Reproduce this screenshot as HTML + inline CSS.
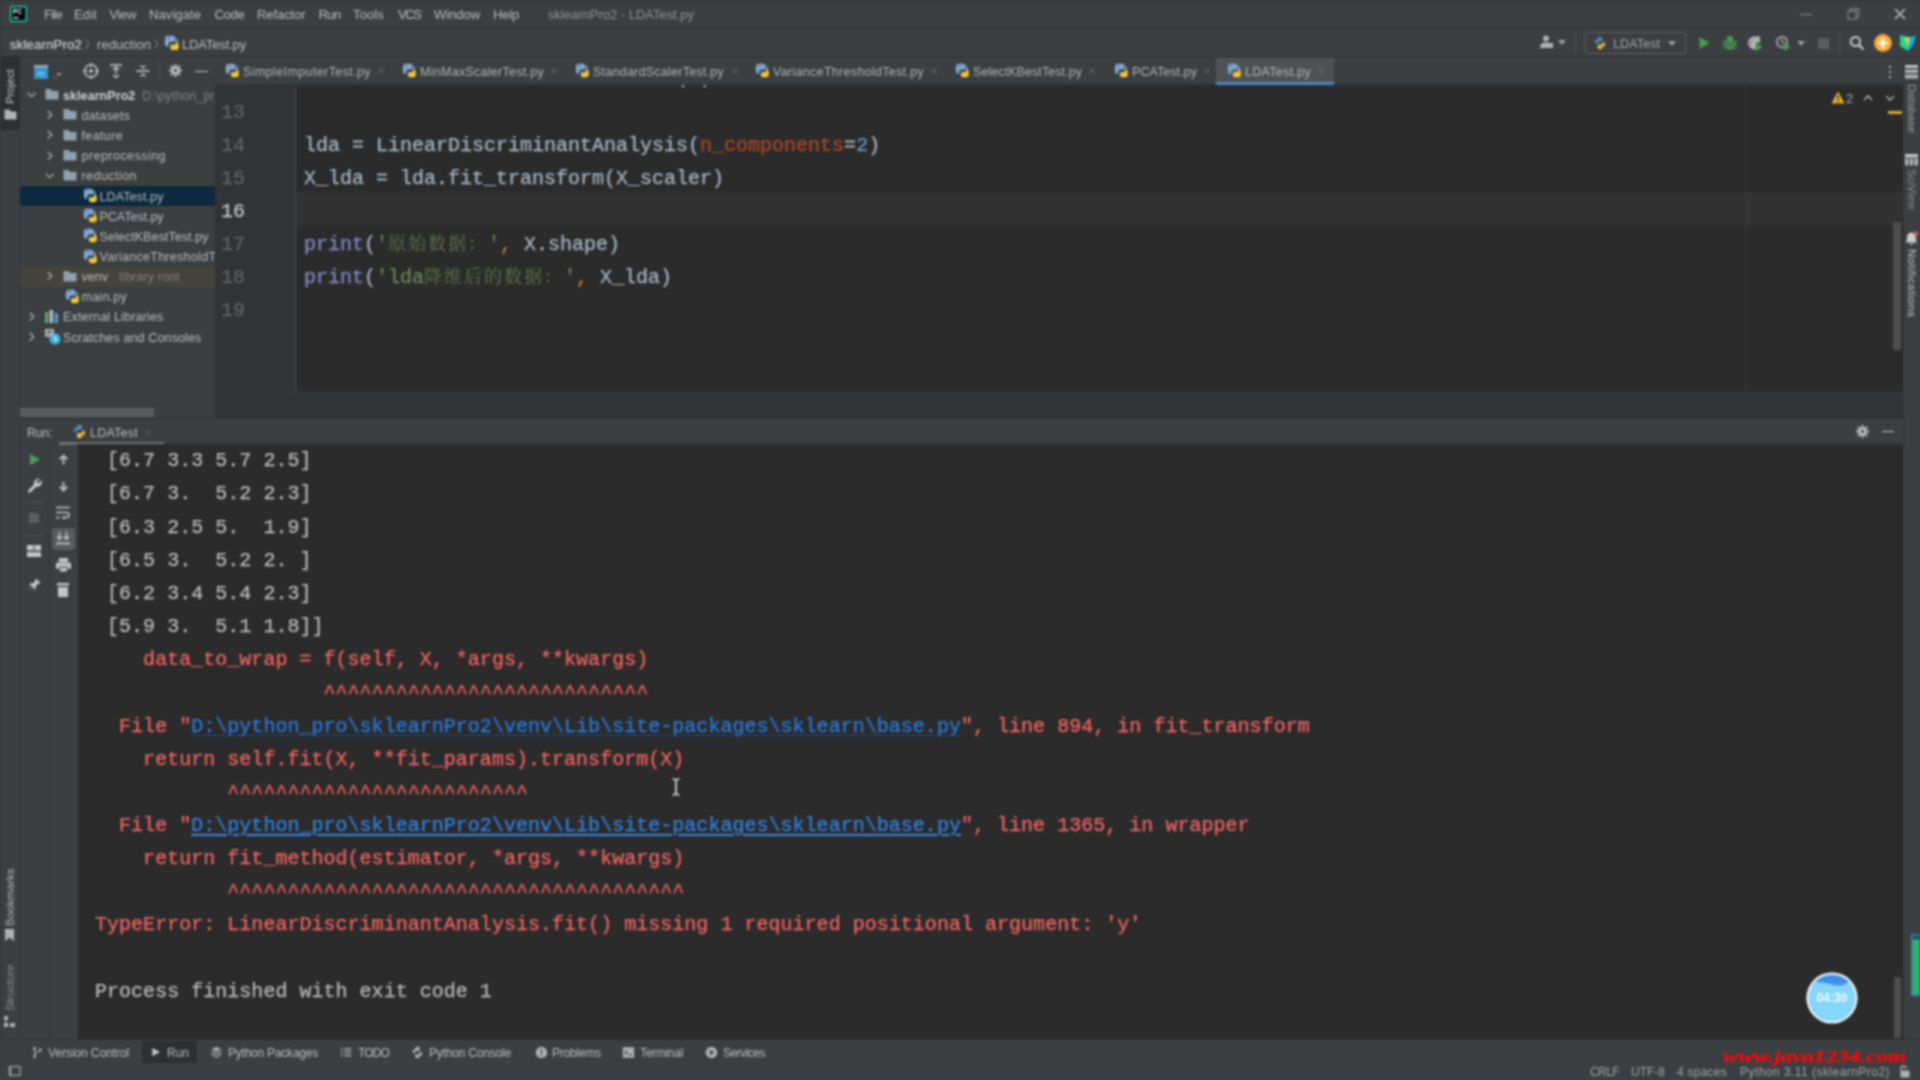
<!DOCTYPE html>
<html lang="zh">
<head>
<meta charset="utf-8">
<title>sklearnPro2 - LDATest.py</title>
<style>
*{box-sizing:border-box;margin:0;padding:0}
html,body{width:1920px;height:1080px;overflow:hidden;background:#3c3f41}
body{position:relative;filter:blur(1px);font-family:"Liberation Sans","Noto Sans CJK SC",sans-serif;font-size:12.5px;color:#bbbbbb}
.a{position:absolute}
.t{position:absolute;white-space:nowrap;line-height:16px;height:16px}
.mono{font-family:"Liberation Mono","Noto Sans CJK SC",monospace;-webkit-text-stroke:.25px currentColor}
svg{position:absolute;overflow:visible}
#titlebar{left:0;top:0;width:1920px;height:28px;background:#3c3f41;border-bottom:1px solid #2f3133}
#navbar{left:0;top:28px;width:1920px;height:29px;background:#3c3f41;border-bottom:1px solid #323232}
#leftstrip{left:0;top:57px;width:20px;height:983px;background:#3c3f41;border-right:1px solid #353739}
#rightstrip{left:1903px;top:57px;width:17px;height:983px;background:#3c3f41;border-left:1px solid #353739}
#project{left:20px;top:57px;width:195px;height:362px;background:#3c3f41}
#tabbar{left:215px;top:57px;width:1688px;height:28px;background:#3c3f41}
#editor{top:85px;height:307px;background:#2b2b2b;overflow:hidden}
#edbottom{top:392px;height:26px;background:#313335;border-top:1px solid #3b3d3f}
#runhead{left:20px;top:418px;width:1883px;height:26px;background:#3c3f41;border-top:1px solid #323232;border-bottom:1px solid #353739}
#runtools{left:20px;top:444px;width:58px;height:595px;background:#3c3f41}
#console{left:78px;top:444px;width:1825px;height:595px;background:#2b2b2b;overflow:hidden}
#bottomstrip{left:0;top:1039px;width:1920px;height:24px;background:#3c3f41;border-top:1px solid #323232}
#statusbar{left:0;top:1063px;width:1920px;height:17px;background:#3c3f41}
.ln{position:absolute;width:24px;height:33px;line-height:33px;font-size:20px;color:#606366;text-align:right;white-space:pre}
.cl{position:absolute;height:33px;line-height:33px;font-size:20px;color:#a9b7c6;white-space:pre}
.cjk{font-family:"Noto Serif CJK SC","Noto Sans CJK SC",serif;line-height:0;font-size:18px;letter-spacing:2px;-webkit-text-stroke:0;color:#5f7a50}
.k{color:#cc7832}.s{color:#6a8759}.b{color:#8888c6}.n{color:#6897bb}.p{color:#aa4926}
.co{position:absolute;left:17px;height:33px;line-height:33px;font-size:20px;color:#bbbbbb;white-space:pre;letter-spacing:.025px}
.er{color:#f46561}
.lk1{color:#287bde;text-decoration:underline;text-decoration-color:#1c4c84;text-decoration-thickness:1.2px;text-underline-offset:3px}
.lku{color:#2f82e4;text-decoration:underline;text-decoration-color:#3a86e6;text-decoration-thickness:1.5px;text-underline-offset:3px}
</style>
</head>
<body>
<div id="titlebar" class="a"></div><div id="navbar" class="a"></div>
<div id="leftstrip" class="a"></div><div id="rightstrip" class="a"></div>
<div id="project" class="a"></div><div id="tabbar" class="a"></div>
<div class="a" style="left:0.0px;top:0.0px;width:1920.0px;height:1.0px;background:#2e3032;"></div>
<div class="a" style="left:0.0px;top:0.0px;width:1.0px;height:1080.0px;background:#303234;"></div>
<svg style="left:10.0px;top:6.0px;" width="17" height="16" viewBox="0 0 17 16"><rect x="0" y="0" width="17" height="16" rx="2" fill="#23d18b"/><rect x="0" y="0" width="17" height="16" rx="2" fill="#12b5d6" opacity=".35"/><rect x="1.6" y="1.6" width="13.8" height="12.8" fill="#000"/><text x="3" y="8.300" font-family="Liberation Sans,sans-serif" font-weight="bold" font-size="6.5" fill="#fff">PC</text><rect x="3" y="11" width="5.500" height="1.300" fill="#fff"/></svg>
<div class="t " style="left:44.0px;top:6.5px;font-size:13.00px;color:#bbbbbb;letter-spacing:-0.737px;">File</div>
<div class="t " style="left:74.0px;top:6.5px;font-size:13.00px;color:#bbbbbb;letter-spacing:0.150px;">Edit</div>
<div class="t " style="left:109.5px;top:6.5px;font-size:13.00px;color:#bbbbbb;letter-spacing:-0.361px;">View</div>
<div class="t " style="left:149.0px;top:6.5px;font-size:13.00px;color:#bbbbbb;letter-spacing:0.086px;">Navigate</div>
<div class="t " style="left:214.5px;top:6.5px;font-size:13.00px;color:#bbbbbb;letter-spacing:-0.270px;">Code</div>
<div class="t " style="left:257.0px;top:6.5px;font-size:13.00px;color:#bbbbbb;letter-spacing:-0.079px;">Refactor</div>
<div class="t " style="left:318.7px;top:6.5px;font-size:13.00px;color:#bbbbbb;letter-spacing:-0.683px;">Run</div>
<div class="t " style="left:353.0px;top:6.5px;font-size:13.00px;color:#bbbbbb;letter-spacing:0.130px;">Tools</div>
<div class="t " style="left:398.0px;top:6.5px;font-size:13.00px;color:#bbbbbb;letter-spacing:-1.343px;">VCS</div>
<div class="t " style="left:434.0px;top:6.5px;font-size:13.00px;color:#bbbbbb;letter-spacing:-0.039px;">Window</div>
<div class="t " style="left:493.0px;top:6.5px;font-size:13.00px;color:#bbbbbb;letter-spacing:-0.184px;">Help</div>
<div class="t " style="left:548.0px;top:6.5px;font-size:13.00px;color:#8e9091;letter-spacing:-0.018px;">sklearnPro2 - LDATest.py</div>
<svg style="left:1800.0px;top:8.0px;" width="12" height="12" viewBox="0 0 12 12"><path d="M0 6.500h12" stroke="#85878a" stroke-width="1.2"/></svg>
<svg style="left:1847.0px;top:8.0px;" width="12" height="12" viewBox="0 0 12 12"><path d="M2.500 3.500h7v7M0.800 1.500h8.500" stroke="#9a9c9e" stroke-width="1.1" fill="none" opacity="0"/><rect x="1" y="3" width="8" height="8" fill="none" stroke="#85878a" stroke-width="1.2"/><path d="M3.500 3V.8h8v8H9.500" fill="none" stroke="#85878a" stroke-width="1.2"/></svg>
<svg style="left:1894.0px;top:8.0px;" width="12" height="12" viewBox="0 0 12 12"><path d="M1 1l10 10M11 1L1 11" stroke="#c3c5c7" stroke-width="1.500"/></svg>
<div class="t " style="left:10.0px;top:36.5px;font-size:13.00px;color:#c9cbcc;letter-spacing:0.239px;text-shadow:0 0 .6px #c9cbcc;">sklearnPro2</div>
<svg style="left:78.5px;top:35.5px;" width="16" height="16" viewBox="0 0 16 16"><path d="M6.500 3.500l3.500 4.500-3.500 4.500" fill="none" stroke="#77797b" stroke-width="1.1"/></svg>
<div class="t " style="left:97.0px;top:36.5px;font-size:13.00px;color:#bbbbbb;letter-spacing:0.058px;">reduction</div>
<svg style="left:147.5px;top:35.5px;" width="16" height="16" viewBox="0 0 16 16"><path d="M6.500 3.500l3.500 4.500-3.500 4.500" fill="none" stroke="#77797b" stroke-width="1.1"/></svg>
<svg style="left:163.5px;top:34.5px;" width="16" height="16" viewBox="0 0 16 16"><path d="M3.800 .8h5c1.300 0 2.200.9 2.200 2.200v3.800H7c-1.500 0-2.600 1.100-2.600 2.600v2H3.200C1.900 11.400 1 10.400 1 9V3.800C1 2 2.100.8 3.800.8z" fill="#7fa9d6"/><path d="M11.600 2.500l2.200 2.300v2.500h-2.200z" fill="#a9b7c6" opacity=".75"/><path d="M12 7.400h.8c1.200 0 1.900 1 1.900 2.200v3c0 1.500-1 2.500-2.500 2.500H8.400c-1.200 0-2-.8-2-2v-3.300h3.400c1.300 0 2.200-1 2.200-2.400z" fill="#f0c63c"/><circle cx="4.600" cy="3" r=".8" fill="#3c3f41"/></svg>
<div class="t " style="left:182.0px;top:36.5px;font-size:13.00px;color:#bbbbbb;letter-spacing:-0.151px;">LDATest.py</div>
<svg style="left:1538.0px;top:34.0px;" width="16" height="16" viewBox="0 0 16 16"><circle cx="8" cy="4.500" r="3" fill="#afb1b3"/><path d="M2 14c0-4 2.500-5.500 6-5.500s6 1.500 6 5.500z" fill="#afb1b3"/><rect x="9" y="9" width="6" height="5" fill="#afb1b3"/></svg>
<svg style="left:1558.0px;top:40.0px;" width="8" height="6" viewBox="0 0 8 6"><path d="M0 0h8l-4 5z" fill="#9da0a2"/></svg>
<div class="a" style="left:1585px;top:32px;width:101px;height:22px;border:1px solid #5e6162;border-radius:2px"></div>
<svg style="left:1593.0px;top:36.0px;" width="14" height="14" viewBox="0 0 16 16"><path d="M7.8 1C5 1 5.2 2.2 5.2 2.2v1.3h2.7v.4H4.1S2.3 3.7 2.3 6.5s1.6 2.7 1.6 2.7h.9V7.9s0-1.6 1.6-1.6h2.7s1.500.0 1.5-1.500V2.400S10.900 1 7.800 1z" fill="#4f8fc5"/><path d="M8.2 15c2.800 0 2.600-1.200 2.600-1.200v-1.300H8.100v-.4h3.800s1.800.2 1.800-2.600-1.600-2.700-1.600-2.700h-.9v1.300s0 1.600-1.600 1.600H6.900s-1.500 0-1.500 1.500v2.400S5.100 15 8.200 15z" fill="#f0c23b"/></svg>
<div class="t " style="left:1613.0px;top:35.5px;font-size:12.50px;color:#a6a8aa;letter-spacing:0.098px;">LDATest</div>
<svg style="left:1668.0px;top:40.5px;" width="8" height="6" viewBox="0 0 8 6"><path d="M0 0h8l-4 5z" fill="#9da0a2"/></svg>
<svg style="left:1696.0px;top:34.5px;" width="16" height="16" viewBox="0 0 16 16"><path d="M3.500 2l10 6-10 6z" fill="#499c54"/></svg>
<svg style="left:1722.0px;top:34.5px;" width="16" height="16" viewBox="0 0 16 16"><ellipse cx="8" cy="9.300" rx="5" ry="5.500" fill="#499c54"/><path d="M4.800 4.200a3.200 3.200 0 016.400 0z" fill="#499c54"/><path d="M1 6l2.500 1.500M15 6l-2.500 1.500M.8 9.500h2.500M15.200 9.500h-2.500M1.300 13.500l2.500-1.300M14.700 13.500l-2.500-1.300" stroke="#499c54" stroke-width="1.400"/><path d="M4 8h8M4 11h8" stroke="#3c3f41" stroke-width="1.100"/></svg>
<svg style="left:1747.0px;top:34.5px;" width="16" height="16" viewBox="0 0 16 16"><path d="M7.500 1.500a6.500 6.500 0 100 13c.5 0 1 0 1.500-.2V1.700c-.5-.2-1-.2-1.500-.2z" fill="#afb1b3"/><path d="M8 1.500h5v6H8z" fill="#afb1b3"/><path d="M4 5a4 4 0 000 6z" fill="#3c3f41" opacity=".5"/><path d="M9.500 8l6 4-6 4z" fill="#499c54"/></svg>
<svg style="left:1775.0px;top:34.5px;" width="16" height="16" viewBox="0 0 16 16"><circle cx="7" cy="7" r="5.200" fill="none" stroke="#afb1b3" stroke-width="1.600"/><path d="M7 3.500V7l2.500 1.500" stroke="#afb1b3" stroke-width="1.300" fill="none"/><path d="M9 8l6.500 4-6.500 4z" fill="#499c54"/></svg>
<svg style="left:1797.0px;top:40.5px;" width="8" height="6" viewBox="0 0 8 6"><path d="M0 0h8l-4 5z" fill="#9da0a2"/></svg>
<div class="a" style="left:1817.5px;top:37.5px;width:11.0px;height:11.0px;background:#5a5d5f;"></div>
<div class="a" style="left:1839.0px;top:33.0px;width:1.0px;height:20.0px;background:#515456;"></div>
<div class="a" style="left:1574.5px;top:33.0px;width:1.0px;height:20.0px;background:#515456;"></div>
<svg style="left:1848.5px;top:35.0px;" width="16" height="16" viewBox="0 0 16 16"><circle cx="6.500" cy="6.500" r="4.600" fill="none" stroke="#c9cbcc" stroke-width="2"/><path d="M10 10l4.500 4.500" stroke="#c9cbcc" stroke-width="2.200"/></svg>
<svg style="left:1873.5px;top:33.5px;" width="18" height="18" viewBox="0 0 18 18"><circle cx="9" cy="9" r="9" fill="#f2a134"/><circle cx="9" cy="9" r="7" fill="#f7b64e"/><path d="M9 4.500v9M4.500 9h9" stroke="#fff" stroke-width="2.200"/></svg>
<svg style="left:1899.0px;top:33.5px;" width="18" height="18" viewBox="0 0 18 18"><path d="M1 1l8 2v14l-8-5z" fill="#21d789"/><path d="M9 3l8-1-3 9-5 6z" fill="#0fb2e8"/><path d="M5 3l6 1-2 9z" fill="#f5d23c" opacity=".9"/></svg>
<div class="a" style="left:0.0px;top:57.0px;width:20.0px;height:73.0px;background:#2d2f30;"></div>
<div class="t vt" style="left:2px;top:104px;font-size:11px;color:#c4c6c8;transform:rotate(-90deg);transform-origin:0 0;width:40px;letter-spacing:.1px;">Project</div>
<svg style="left:3.5px;top:108.0px;" width="13" height="13" viewBox="0 0 13 13"><path d="M.5 1.500h5l1.500 2h5.500v8h-12z" fill="#afb1b3"/></svg>
<div class="t vt" style="left:2px;top:926px;font-size:11.5px;color:#b4b6b8;transform:rotate(-90deg);transform-origin:0 0;width:62px;">Bookmarks</div>
<svg style="left:4.0px;top:929.0px;" width="11" height="12" viewBox="0 0 11 12"><path d="M1 0h9v12l-4.500-3.500L1 12z" fill="#afb1b3"/></svg>
<div class="t vt" style="left:2px;top:1011px;font-size:11.5px;color:#8a8c8e;transform:rotate(-90deg);transform-origin:0 0;width:52px;">Structure</div>
<svg style="left:4.0px;top:1016.0px;" width="11" height="12" viewBox="0 0 11 12"><rect x="0" y="0" width="4" height="4" fill="#afb1b3"/><rect x="0" y="7" width="4" height="4" fill="#afb1b3"/><rect x="6" y="7" width="5" height="4" fill="#afb1b3"/><path d="M2 4v5" stroke="#afb1b3"/></svg>
<svg style="left:1905.0px;top:65.0px;" width="13" height="14" viewBox="0 0 13 14"><rect x="0" y="0" width="13" height="3" fill="#c3c5c7"/><rect x="0" y="4.500" width="13" height="3.500" fill="#afb1b3"/><rect x="0" y="9.500" width="13" height="4" fill="#afb1b3"/></svg>
<div class="t vt" style="left:1920px;top:84px;font-size:11.5px;color:#9a9c9e;transform:rotate(90deg);transform-origin:0 0;width:50px;">Database</div>
<svg style="left:1905.0px;top:154.0px;" width="13" height="12" viewBox="0 0 13 12"><rect x="0" y="0" width="13" height="3.500" fill="#c3c5c7"/><rect x="0" y="4.500" width="3.500" height="7" fill="#afb1b3"/><rect x="4.700" y="4.500" width="3.500" height="7" fill="#afb1b3"/><rect x="9.400" y="4.500" width="3.600" height="7" fill="#afb1b3"/></svg>
<div class="t vt" style="left:1920px;top:169px;font-size:11.5px;color:#8a8c8e;transform:rotate(90deg);transform-origin:0 0;width:42px;">SciView</div>
<svg style="left:1905.0px;top:231.0px;" width="13" height="14" viewBox="0 0 13 14"><path d="M6.500 1.500c-3 0-4.500 2-4.500 5v3L.5 11.500h12L11 9.500v-3c0-3-1.500-5-4.500-5z" fill="#c9cbcc"/><path d="M5 12.500h3a1.500 1.500 0 01-3 0z" fill="#c9cbcc"/><circle cx="11" cy="2.500" r="2.300" fill="#e05555"/></svg>
<div class="t vt" style="left:1920px;top:249px;font-size:11.5px;color:#c3c5c7;transform:rotate(90deg);transform-origin:0 0;width:70px;letter-spacing:.45px">Notifications</div>
<svg style="left:33.5px;top:65.0px;" width="14" height="14" viewBox="0 0 14 14"><rect x="0" y="0" width="14" height="14" fill="#3592c4"/><rect x="0" y="0" width="14" height="3" fill="#8fa9b8"/><rect x="3" y="6" width="8" height="5" fill="#4fb4e6"/></svg>
<div class="t " style="left:52.0px;top:66.5px;font-size:10.00px;color:#8a8c8e;letter-spacing:-0.278px;">..</div>
<svg style="left:56.0px;top:73.0px;" width="6" height="4" viewBox="0 0 6 4"><path d="M0 0h6l-3 3.500z" fill="#8a8c8e"/></svg>
<svg style="left:82.5px;top:63.0px;" width="16" height="16" viewBox="0 0 16 16"><circle cx="8" cy="8" r="6.300" fill="none" stroke="#c3c5c7" stroke-width="1.500"/><circle cx="8" cy="8" r="2" fill="#c3c5c7"/><path d="M8 0v4M8 12v4M0 8h4M12 8h4" stroke="#c3c5c7" stroke-width="1.300"/></svg>
<svg style="left:108.0px;top:63.0px;" width="16" height="16" viewBox="0 0 16 16"><path d="M2 2h12" stroke="#c3c5c7" stroke-width="1.600"/><path d="M8 4.500v7M5 7l3-3 3 3" stroke="#c3c5c7" stroke-width="1.400" fill="none"/><path d="M5 12l3 2.500 3-2.500" stroke="#c3c5c7" stroke-width="1.400" fill="none"/></svg>
<svg style="left:134.5px;top:63.0px;" width="16" height="16" viewBox="0 0 16 16"><path d="M1.500 8h13" stroke="#c3c5c7" stroke-width="1.600"/><path d="M5.500 2.500L8 5l2.500-2.500M5.500 13.500L8 11l2.500 2.500" stroke="#c3c5c7" stroke-width="1.400" fill="none"/></svg>
<div class="a" style="left:159.0px;top:61.0px;width:1.0px;height:20.0px;background:#505355;"></div>
<svg style="left:168.0px;top:63.0px;" width="15" height="15" viewBox="0 0 16 16"><rect x="7" y="1" width="2" height="3.2" fill="#c3c5c7" transform="rotate(0 8 8)"/><rect x="7" y="1" width="2" height="3.2" fill="#c3c5c7" transform="rotate(45 8 8)"/><rect x="7" y="1" width="2" height="3.2" fill="#c3c5c7" transform="rotate(90 8 8)"/><rect x="7" y="1" width="2" height="3.2" fill="#c3c5c7" transform="rotate(135 8 8)"/><rect x="7" y="1" width="2" height="3.2" fill="#c3c5c7" transform="rotate(180 8 8)"/><rect x="7" y="1" width="2" height="3.2" fill="#c3c5c7" transform="rotate(225 8 8)"/><rect x="7" y="1" width="2" height="3.2" fill="#c3c5c7" transform="rotate(270 8 8)"/><rect x="7" y="1" width="2" height="3.2" fill="#c3c5c7" transform="rotate(315 8 8)"/><circle cx="8" cy="8" r="4.2" fill="#c3c5c7"/><circle cx="8" cy="8" r="1.8" fill="#3c3f41"/></svg>
<div class="a" style="left:195.0px;top:70.5px;width:13.0px;height:1.8px;background:#c3c5c7;"></div>
<div class="a" style="left:20.0px;top:186.1px;width:195.0px;height:20.2px;background:#0d293e;"></div>
<div class="a" style="left:20.0px;top:266.6px;width:195.0px;height:20.2px;background:#45433a;"></div>
<svg style="left:24.2px;top:87.0px;" width="15.5" height="15.5" viewBox="0 0 16 16"><path d="M4 6l4 4 4-4" fill="none" stroke="#9da0a2" stroke-width="1.6"/></svg>
<svg style="left:43.7px;top:86.3px;" width="16" height="16" viewBox="0 0 16 16"><path d="M1.5 3h5l1.5 2h6.5v8.5h-13z" fill="#8fa1ad"/></svg>
<div class="t " style="left:63.0px;top:87.8px;font-size:12.50px;color:#d0d2d3;letter-spacing:0.075px;font-weight:bold;">sklearnPro2</div>
<div class="t " style="left:142.0px;top:87.8px;font-size:12.50px;color:#7f8284;letter-spacing:0.094px;">D:\python_pro\sk</div>
<svg style="left:41.8px;top:107.2px;" width="15.5" height="15.5" viewBox="0 0 16 16"><path d="M6 4l4 4-4 4" fill="none" stroke="#9da0a2" stroke-width="1.6"/></svg>
<svg style="left:62.0px;top:106.4px;" width="16" height="16" viewBox="0 0 16 16"><path d="M1.5 3h5l1.5 2h6.5v8.5h-13z" fill="#8fa1ad"/></svg>
<div class="t " style="left:81.5px;top:107.9px;font-size:12.50px;color:#bbbbbb;letter-spacing:0.156px;">datasets</div>
<svg style="left:41.8px;top:127.3px;" width="15.5" height="15.5" viewBox="0 0 16 16"><path d="M6 4l4 4-4 4" fill="none" stroke="#9da0a2" stroke-width="1.6"/></svg>
<svg style="left:62.0px;top:126.6px;" width="16" height="16" viewBox="0 0 16 16"><path d="M1.5 3h5l1.5 2h6.5v8.5h-13z" fill="#8fa1ad"/></svg>
<div class="t " style="left:81.5px;top:128.1px;font-size:12.50px;color:#bbbbbb;letter-spacing:0.369px;">feature</div>
<svg style="left:41.8px;top:147.5px;" width="15.5" height="15.5" viewBox="0 0 16 16"><path d="M6 4l4 4-4 4" fill="none" stroke="#9da0a2" stroke-width="1.6"/></svg>
<svg style="left:62.0px;top:146.8px;" width="16" height="16" viewBox="0 0 16 16"><path d="M1.5 3h5l1.5 2h6.5v8.5h-13z" fill="#8fa1ad"/></svg>
<div class="t " style="left:81.5px;top:148.2px;font-size:12.50px;color:#bbbbbb;letter-spacing:0.460px;">preprocessing</div>
<svg style="left:41.8px;top:167.6px;" width="15.5" height="15.5" viewBox="0 0 16 16"><path d="M4 6l4 4 4-4" fill="none" stroke="#9da0a2" stroke-width="1.6"/></svg>
<svg style="left:62.0px;top:166.9px;" width="16" height="16" viewBox="0 0 16 16"><path d="M1.5 3h5l1.5 2h6.5v8.5h-13z" fill="#8fa1ad"/></svg>
<div class="t " style="left:81.5px;top:168.4px;font-size:12.50px;color:#bbbbbb;letter-spacing:0.453px;">reduction</div>
<svg style="left:82.5px;top:188.1px;" width="15" height="15" viewBox="0 0 16 16"><path d="M3.800 .8h5c1.300 0 2.200.9 2.200 2.200v3.800H7c-1.500 0-2.600 1.100-2.600 2.600v2H3.200C1.900 11.400 1 10.400 1 9V3.800C1 2 2.100.8 3.800.8z" fill="#7fa9d6"/><path d="M11.600 2.500l2.200 2.300v2.500h-2.200z" fill="#a9b7c6" opacity=".75"/><path d="M12 7.400h.8c1.200 0 1.900 1 1.900 2.200v3c0 1.500-1 2.500-2.500 2.500H8.400c-1.200 0-2-.8-2-2v-3.300h3.400c1.300 0 2.200-1 2.200-2.400z" fill="#f0c63c"/><circle cx="4.600" cy="3" r=".8" fill="#3c3f41"/></svg>
<div class="t " style="left:99.5px;top:188.6px;font-size:12.50px;color:#bbbbbb;letter-spacing:0.101px;">LDATest.py</div>
<svg style="left:82.5px;top:208.2px;" width="15" height="15" viewBox="0 0 16 16"><path d="M3.800 .8h5c1.300 0 2.200.9 2.200 2.200v3.800H7c-1.500 0-2.600 1.100-2.600 2.600v2H3.200C1.900 11.400 1 10.400 1 9V3.800C1 2 2.100.8 3.800.8z" fill="#7fa9d6"/><path d="M11.600 2.500l2.200 2.300v2.500h-2.200z" fill="#a9b7c6" opacity=".75"/><path d="M12 7.400h.8c1.200 0 1.900 1 1.900 2.200v3c0 1.500-1 2.500-2.500 2.500H8.400c-1.200 0-2-.8-2-2v-3.300h3.400c1.300 0 2.200-1 2.200-2.400z" fill="#f0c63c"/><circle cx="4.600" cy="3" r=".8" fill="#3c3f41"/></svg>
<div class="t " style="left:99.5px;top:208.7px;font-size:12.50px;color:#bbbbbb;letter-spacing:-0.037px;">PCATest.py</div>
<svg style="left:82.5px;top:228.3px;" width="15" height="15" viewBox="0 0 16 16"><path d="M3.800 .8h5c1.300 0 2.200.9 2.200 2.200v3.800H7c-1.500 0-2.600 1.100-2.600 2.600v2H3.200C1.900 11.400 1 10.400 1 9V3.800C1 2 2.100.8 3.800.8z" fill="#7fa9d6"/><path d="M11.600 2.500l2.200 2.300v2.500h-2.200z" fill="#a9b7c6" opacity=".75"/><path d="M12 7.400h.8c1.200 0 1.900 1 1.900 2.200v3c0 1.500-1 2.500-2.500 2.500H8.400c-1.200 0-2-.8-2-2v-3.300h3.400c1.300 0 2.200-1 2.200-2.400z" fill="#f0c63c"/><circle cx="4.600" cy="3" r=".8" fill="#3c3f41"/></svg>
<div class="t " style="left:99.5px;top:228.8px;font-size:12.50px;color:#bbbbbb;letter-spacing:0.073px;">SelectKBestTest.py</div>
<svg style="left:82.5px;top:248.5px;" width="15" height="15" viewBox="0 0 16 16"><path d="M3.800 .8h5c1.300 0 2.200.9 2.200 2.200v3.800H7c-1.500 0-2.600 1.100-2.600 2.600v2H3.200C1.900 11.400 1 10.400 1 9V3.800C1 2 2.100.8 3.800.8z" fill="#7fa9d6"/><path d="M11.600 2.500l2.200 2.300v2.500h-2.200z" fill="#a9b7c6" opacity=".75"/><path d="M12 7.400h.8c1.200 0 1.900 1 1.900 2.200v3c0 1.500-1 2.500-2.500 2.500H8.400c-1.200 0-2-.8-2-2v-3.300h3.400c1.300 0 2.200-1 2.200-2.400z" fill="#f0c63c"/><circle cx="4.600" cy="3" r=".8" fill="#3c3f41"/></svg>
<div class="t " style="left:99.5px;top:249.0px;font-size:12.50px;color:#bbbbbb;letter-spacing:0.288px;">VarianceThresholdTest.py</div>
<svg style="left:41.8px;top:268.4px;" width="15.5" height="15.5" viewBox="0 0 16 16"><path d="M6 4l4 4-4 4" fill="none" stroke="#9da0a2" stroke-width="1.6"/></svg>
<svg style="left:62.0px;top:267.6px;" width="16" height="16" viewBox="0 0 16 16"><path d="M1.5 3h5l1.5 2h6.5v8.5h-13z" fill="#8fa1ad"/></svg>
<div class="t " style="left:81.5px;top:269.1px;font-size:12.50px;color:#bbbbbb;letter-spacing:0.024px;">venv</div>
<div class="t " style="left:119.0px;top:269.1px;font-size:12.50px;color:#7f8284;letter-spacing:0.163px;">library root</div>
<svg style="left:64.5px;top:288.8px;" width="15" height="15" viewBox="0 0 16 16"><path d="M3.800 .8h5c1.300 0 2.200.9 2.200 2.200v3.800H7c-1.500 0-2.600 1.100-2.600 2.600v2H3.200C1.900 11.400 1 10.400 1 9V3.800C1 2 2.100.8 3.800.8z" fill="#7fa9d6"/><path d="M11.600 2.500l2.200 2.300v2.500h-2.200z" fill="#a9b7c6" opacity=".75"/><path d="M12 7.400h.8c1.200 0 1.900 1 1.900 2.200v3c0 1.500-1 2.500-2.500 2.500H8.400c-1.200 0-2-.8-2-2v-3.300h3.400c1.300 0 2.200-1 2.200-2.400z" fill="#f0c63c"/><circle cx="4.600" cy="3" r=".8" fill="#3c3f41"/></svg>
<div class="t " style="left:81.5px;top:289.3px;font-size:12.50px;color:#bbbbbb;letter-spacing:0.247px;">main.py</div>
<svg style="left:24.2px;top:308.7px;" width="15.5" height="15.5" viewBox="0 0 16 16"><path d="M6 4l4 4-4 4" fill="none" stroke="#9da0a2" stroke-width="1.6"/></svg>
<svg style="left:45.0px;top:309.9px;" width="14" height="13" viewBox="0 0 14 13"><rect x="0" y="2" width="3" height="11" fill="#6aa37a"/><rect x="4.500" y="0" width="3.500" height="13" fill="#b4bcc3"/><path d="M9.500 2.500l3.500 1.200v9.300H9.500z" fill="#5a98c8"/></svg>
<div class="t " style="left:63.0px;top:309.4px;font-size:12.50px;color:#bbbbbb;letter-spacing:0.180px;">External Libraries</div>
<svg style="left:24.2px;top:328.8px;" width="15.5" height="15.5" viewBox="0 0 16 16"><path d="M6 4l4 4-4 4" fill="none" stroke="#9da0a2" stroke-width="1.6"/></svg>
<svg style="left:45.0px;top:329.1px;" width="16" height="16" viewBox="0 0 16 16"><rect x="0" y="0" width="9" height="8" fill="#afb1b3"/><path d="M2 2.500h5M2 5h3" stroke="#3c3f41"/><circle cx="10" cy="10" r="5.500" fill="#40b6e0"/><path d="M10 7v3.500l2 1" stroke="#fff" stroke-width="1.200" fill="none"/></svg>
<div class="t " style="left:63.0px;top:329.6px;font-size:12.50px;color:#bbbbbb;letter-spacing:0.137px;">Scratches and Consoles</div>
<div class="a" style="left:20.0px;top:404.0px;width:195.0px;height:15.0px;background:#3c3f41;"></div>
<div class="a" style="left:20.0px;top:408.0px;width:134.0px;height:8.5px;background:#595b5d;"></div>
<div class="a" style="left:215px;top:57px;width:1688px;height:28px;background:#3c3f41;border-bottom:1px solid #323232"></div>
<div class="a" style="left:1216.0px;top:58.0px;width:118.0px;height:27.0px;background:#4e5254;"></div>
<div class="a" style="left:1216.0px;top:81.5px;width:118.0px;height:3.5px;background:#4a88c7;"></div>
<svg style="left:225.0px;top:63.0px;" width="15" height="15" viewBox="0 0 16 16"><path d="M3.800 .8h5c1.300 0 2.200.9 2.200 2.200v3.800H7c-1.500 0-2.600 1.100-2.600 2.600v2H3.200C1.900 11.400 1 10.400 1 9V3.800C1 2 2.100.8 3.800.8z" fill="#7fa9d6"/><path d="M11.600 2.500l2.200 2.300v2.500h-2.200z" fill="#a9b7c6" opacity=".75"/><path d="M12 7.400h.8c1.200 0 1.900 1 1.900 2.200v3c0 1.500-1 2.500-2.500 2.500H8.400c-1.200 0-2-.8-2-2v-3.300h3.400c1.300 0 2.200-1 2.200-2.400z" fill="#f0c63c"/><circle cx="4.600" cy="3" r=".8" fill="#3c3f41"/></svg>
<div class="t " style="left:243.0px;top:63.5px;font-size:12.50px;color:#b2b4b6;letter-spacing:0.391px;">SimpleImputerTest.py</div>
<svg style="left:375.0px;top:65.0px;" width="12" height="12" viewBox="0 0 16 16"><path d="M4.5 4.5l7 7M11.5 4.5l-7 7" stroke="#6e7173" stroke-width="1.2" fill="none"/></svg>
<svg style="left:402.0px;top:63.0px;" width="15" height="15" viewBox="0 0 16 16"><path d="M3.800 .8h5c1.300 0 2.200.9 2.200 2.200v3.800H7c-1.500 0-2.600 1.100-2.600 2.600v2H3.200C1.900 11.400 1 10.400 1 9V3.800C1 2 2.100.8 3.800.8z" fill="#7fa9d6"/><path d="M11.600 2.500l2.200 2.300v2.500h-2.200z" fill="#a9b7c6" opacity=".75"/><path d="M12 7.400h.8c1.200 0 1.900 1 1.900 2.200v3c0 1.500-1 2.500-2.500 2.500H8.400c-1.200 0-2-.8-2-2v-3.300h3.400c1.300 0 2.200-1 2.200-2.400z" fill="#f0c63c"/><circle cx="4.600" cy="3" r=".8" fill="#3c3f41"/></svg>
<div class="t " style="left:420.0px;top:63.5px;font-size:12.50px;color:#b2b4b6;letter-spacing:0.274px;">MinMaxScalerTest.py</div>
<svg style="left:548.0px;top:65.0px;" width="12" height="12" viewBox="0 0 16 16"><path d="M4.5 4.5l7 7M11.5 4.5l-7 7" stroke="#6e7173" stroke-width="1.2" fill="none"/></svg>
<svg style="left:575.0px;top:63.0px;" width="15" height="15" viewBox="0 0 16 16"><path d="M3.800 .8h5c1.300 0 2.200.9 2.200 2.200v3.800H7c-1.500 0-2.600 1.100-2.600 2.600v2H3.200C1.900 11.400 1 10.400 1 9V3.800C1 2 2.100.8 3.800.8z" fill="#7fa9d6"/><path d="M11.600 2.500l2.200 2.300v2.500h-2.200z" fill="#a9b7c6" opacity=".75"/><path d="M12 7.400h.8c1.200 0 1.900 1 1.900 2.200v3c0 1.500-1 2.500-2.500 2.500H8.400c-1.200 0-2-.8-2-2v-3.300h3.400c1.300 0 2.200-1 2.200-2.400z" fill="#f0c63c"/><circle cx="4.600" cy="3" r=".8" fill="#3c3f41"/></svg>
<div class="t " style="left:593.0px;top:63.5px;font-size:12.50px;color:#b2b4b6;letter-spacing:0.249px;">StandardScalerTest.py</div>
<svg style="left:729.0px;top:65.0px;" width="12" height="12" viewBox="0 0 16 16"><path d="M4.5 4.5l7 7M11.5 4.5l-7 7" stroke="#6e7173" stroke-width="1.2" fill="none"/></svg>
<svg style="left:755.0px;top:63.0px;" width="15" height="15" viewBox="0 0 16 16"><path d="M3.800 .8h5c1.300 0 2.200.9 2.200 2.200v3.800H7c-1.500 0-2.600 1.100-2.600 2.600v2H3.200C1.900 11.400 1 10.400 1 9V3.800C1 2 2.100.8 3.800.8z" fill="#7fa9d6"/><path d="M11.600 2.500l2.200 2.300v2.500h-2.200z" fill="#a9b7c6" opacity=".75"/><path d="M12 7.400h.8c1.200 0 1.900 1 1.900 2.200v3c0 1.500-1 2.500-2.500 2.500H8.400c-1.200 0-2-.8-2-2v-3.300h3.400c1.300 0 2.200-1 2.200-2.400z" fill="#f0c63c"/><circle cx="4.600" cy="3" r=".8" fill="#3c3f41"/></svg>
<div class="t " style="left:773.0px;top:63.5px;font-size:12.50px;color:#b2b4b6;letter-spacing:0.309px;">VarianceThresholdTest.py</div>
<svg style="left:928.0px;top:65.0px;" width="12" height="12" viewBox="0 0 16 16"><path d="M4.5 4.5l7 7M11.5 4.5l-7 7" stroke="#6e7173" stroke-width="1.2" fill="none"/></svg>
<svg style="left:955.0px;top:63.0px;" width="15" height="15" viewBox="0 0 16 16"><path d="M3.800 .8h5c1.300 0 2.200.9 2.200 2.200v3.800H7c-1.500 0-2.600 1.100-2.600 2.600v2H3.200C1.900 11.400 1 10.400 1 9V3.800C1 2 2.100.8 3.800.8z" fill="#7fa9d6"/><path d="M11.600 2.500l2.200 2.300v2.500h-2.200z" fill="#a9b7c6" opacity=".75"/><path d="M12 7.400h.8c1.200 0 1.900 1 1.900 2.200v3c0 1.500-1 2.500-2.500 2.500H8.400c-1.200 0-2-.8-2-2v-3.300h3.400c1.300 0 2.200-1 2.200-2.400z" fill="#f0c63c"/><circle cx="4.600" cy="3" r=".8" fill="#3c3f41"/></svg>
<div class="t " style="left:973.0px;top:63.5px;font-size:12.50px;color:#b2b4b6;letter-spacing:0.073px;">SelectKBestTest.py</div>
<svg style="left:1086.0px;top:65.0px;" width="12" height="12" viewBox="0 0 16 16"><path d="M4.5 4.5l7 7M11.5 4.5l-7 7" stroke="#6e7173" stroke-width="1.2" fill="none"/></svg>
<svg style="left:1114.0px;top:63.0px;" width="15" height="15" viewBox="0 0 16 16"><path d="M3.800 .8h5c1.300 0 2.200.9 2.200 2.200v3.800H7c-1.500 0-2.600 1.100-2.600 2.600v2H3.200C1.900 11.400 1 10.400 1 9V3.800C1 2 2.100.8 3.800.8z" fill="#7fa9d6"/><path d="M11.600 2.500l2.200 2.300v2.500h-2.200z" fill="#a9b7c6" opacity=".75"/><path d="M12 7.400h.8c1.200 0 1.900 1 1.900 2.200v3c0 1.500-1 2.500-2.500 2.500H8.400c-1.200 0-2-.8-2-2v-3.300h3.400c1.300 0 2.200-1 2.200-2.400z" fill="#f0c63c"/><circle cx="4.600" cy="3" r=".8" fill="#3c3f41"/></svg>
<div class="t " style="left:1132.0px;top:63.5px;font-size:12.50px;color:#b2b4b6;letter-spacing:0.063px;">PCATest.py</div>
<svg style="left:1201.0px;top:65.0px;" width="12" height="12" viewBox="0 0 16 16"><path d="M4.5 4.5l7 7M11.5 4.5l-7 7" stroke="#6e7173" stroke-width="1.2" fill="none"/></svg>
<svg style="left:1227.0px;top:63.0px;" width="15" height="15" viewBox="0 0 16 16"><path d="M3.800 .8h5c1.300 0 2.200.9 2.200 2.200v3.800H7c-1.500 0-2.600 1.100-2.600 2.600v2H3.200C1.900 11.400 1 10.400 1 9V3.800C1 2 2.100.8 3.800.8z" fill="#7fa9d6"/><path d="M11.600 2.500l2.200 2.300v2.500h-2.200z" fill="#a9b7c6" opacity=".75"/><path d="M12 7.400h.8c1.200 0 1.900 1 1.900 2.200v3c0 1.500-1 2.500-2.500 2.500H8.400c-1.200 0-2-.8-2-2v-3.300h3.400c1.300 0 2.200-1 2.200-2.400z" fill="#f0c63c"/><circle cx="4.600" cy="3" r=".8" fill="#3c3f41"/></svg>
<div class="t " style="left:1245.0px;top:63.5px;font-size:12.50px;color:#b2b4b6;letter-spacing:0.301px;">LDATest.py</div>
<svg style="left:1315.0px;top:65.0px;" width="12" height="12" viewBox="0 0 16 16"><path d="M4.5 4.5l7 7M11.5 4.5l-7 7" stroke="#6e7173" stroke-width="1.2" fill="none"/></svg>
<div class="a" style="left:1889.0px;top:65.5px;width:2.0px;height:2.0px;background:#afb1b3;"></div>
<div class="a" style="left:1889.0px;top:70.5px;width:2.0px;height:2.0px;background:#afb1b3;"></div>
<div class="a" style="left:1889.0px;top:75.5px;width:2.0px;height:2.0px;background:#afb1b3;"></div>
<div id="editor" class="a" style="left:215px;width:1688px"><div class="a" style="left:81px;top:107px;width:1607px;height:33.500px;background:#323232"></div><div class="a" style="left:1531px;top:0;width:1px;height:307px;background:#393939"></div><div class="a" style="left:0;top:0;width:81px;height:307px;background:#313335;border-right:1px solid #4b4b4b"><div class="ln mono" style="left:6px;top:-22.4px">12</div><div class="ln mono" style="left:6px;top:10.6px">13</div><div class="ln mono" style="left:6px;top:43.6px">14</div><div class="ln mono" style="left:6px;top:76.6px">15</div><div class="ln mono" style="left:6px;top:109.6px;color:#c4c4c4">16</div><div class="ln mono" style="left:6px;top:142.6px">17</div><div class="ln mono" style="left:6px;top:175.6px">18</div><div class="ln mono" style="left:6px;top:208.6px">19</div></div><div class="cl mono" style="left:89px;top:-23.7px">X_scaler = scaler.fit_transform(X)</div><div class="cl mono" style="left:89px;top:43.6px">lda = LinearDiscriminantAnalysis(<span class="p">n_components</span>=<span class="n">2</span>)</div><div class="cl mono" style="left:89px;top:76.6px">X_lda = lda.fit_transform(X_scaler)</div><div class="cl mono" style="left:89px;top:142.6px"><span class="b">print</span>(<span class="s">'<span class="cjk">原始数据：</span>'</span><span class="k">,</span> X.shape)</div><div class="cl mono" style="left:89px;top:175.6px"><span class="b">print</span>(<span class="s">'lda<span class="cjk">降维后的数据：</span>'</span><span class="k">,</span> X_lda)</div><div class="a" style="left:1678px;top:137px;width:7.500px;height:128px;background:#4d4d4d"></div></div>
<svg style="left:1831.0px;top:91.0px;" width="14" height="13" viewBox="0 0 14 13"><path d="M7 .5l6.500 12h-13z" fill="#e8b52c"/><path d="M7 4.500v4.500M7 10v1.500" stroke="#2b2b2b" stroke-width="1.500"/></svg>
<div class="t " style="left:1846.0px;top:91.0px;font-size:13.00px;color:#a9abad;letter-spacing:0.270px;">2</div>
<svg style="left:1862.0px;top:93.0px;" width="12" height="10" viewBox="0 0 12 10"><path d="M2 7l4-4 4 4" fill="none" stroke="#a9abad" stroke-width="1.600"/></svg>
<svg style="left:1884.0px;top:93.0px;" width="12" height="10" viewBox="0 0 12 10"><path d="M2 3l4 4 4-4" fill="none" stroke="#a9abad" stroke-width="1.600"/></svg>
<div class="a" style="left:1888.0px;top:110.5px;width:14.0px;height:3.0px;background:#d6ab28;"></div>
<div id="edbottom" class="a" style="left:215px;width:1688px"></div>
<div id="runhead" class="a"></div><div id="runtools" class="a"></div>
<div class="t " style="left:27.0px;top:424.5px;font-size:12.50px;color:#bbbbbb;letter-spacing:-0.351px;">Run:</div>
<svg style="left:71.5px;top:424.0px;" width="15" height="15" viewBox="0 0 16 16"><path d="M7.8 1C5 1 5.2 2.2 5.2 2.2v1.3h2.7v.4H4.1S2.3 3.7 2.3 6.5s1.6 2.7 1.6 2.7h.9V7.9s0-1.6 1.6-1.6h2.7s1.500.0 1.5-1.500V2.400S10.900 1 7.800 1z" fill="#4f8fc5"/><path d="M8.2 15c2.800 0 2.600-1.200 2.600-1.200v-1.300H8.100v-.4h3.800s1.800.2 1.800-2.600-1.600-2.700-1.600-2.700h-.9v1.300s0 1.600-1.600 1.600H6.900s-1.500 0-1.500 1.500v2.400S5.100 15 8.200 15z" fill="#f0c23b"/></svg>
<div class="t " style="left:90.0px;top:424.5px;font-size:12.50px;color:#bbbbbb;letter-spacing:0.241px;">LDATest</div>
<svg style="left:143.0px;top:426.5px;" width="11" height="11" viewBox="0 0 16 16"><path d="M4.5 4.5l7 7M11.5 4.5l-7 7" stroke="#6e7173" stroke-width="1.2" fill="none"/></svg>
<div class="a" style="left:59.0px;top:441.5px;width:104.5px;height:3.5px;background:#6c7073;"></div>
<svg style="left:1854.5px;top:423.5px;" width="15" height="15" viewBox="0 0 16 16"><rect x="7" y="1" width="2" height="3.2" fill="#c3c5c7" transform="rotate(0 8 8)"/><rect x="7" y="1" width="2" height="3.2" fill="#c3c5c7" transform="rotate(45 8 8)"/><rect x="7" y="1" width="2" height="3.2" fill="#c3c5c7" transform="rotate(90 8 8)"/><rect x="7" y="1" width="2" height="3.2" fill="#c3c5c7" transform="rotate(135 8 8)"/><rect x="7" y="1" width="2" height="3.2" fill="#c3c5c7" transform="rotate(180 8 8)"/><rect x="7" y="1" width="2" height="3.2" fill="#c3c5c7" transform="rotate(225 8 8)"/><rect x="7" y="1" width="2" height="3.2" fill="#c3c5c7" transform="rotate(270 8 8)"/><rect x="7" y="1" width="2" height="3.2" fill="#c3c5c7" transform="rotate(315 8 8)"/><circle cx="8" cy="8" r="4.2" fill="#c3c5c7"/><circle cx="8" cy="8" r="1.8" fill="#3c3f41"/></svg>
<div class="a" style="left:1882.0px;top:430.5px;width:12.0px;height:1.8px;background:#c3c5c7;"></div>
<div class="a" style="left:48.5px;top:444.0px;width:1.0px;height:595.0px;background:#353739;"></div>
<svg style="left:26.5px;top:451.5px;" width="15" height="15" viewBox="0 0 16 16"><path d="M3 2l11 6-11 6z" fill="#499c54"/></svg>
<svg style="left:26.5px;top:477.5px;" width="15" height="15" viewBox="0 0 16 16"><path d="M13.500 1.500a4.300 4.300 0 00-5.500 5.500L1 14l1.800 1.800 7-7a4.300 4.300 0 005.500-5.500L12.500 6l-2.300-.6-.6-2.300z" fill="#c9cbcd" stroke="#c9cbcd" stroke-width=".8"/></svg>
<div class="a" style="left:25.0px;top:501.5px;width:18.0px;height:1.0px;background:#515456;"></div>
<div class="a" style="left:29.0px;top:513.0px;width:10.0px;height:10.0px;background:#5a5d5f;"></div>
<div class="a" style="left:25.0px;top:534.5px;width:18.0px;height:1.0px;background:#515456;"></div>
<svg style="left:27.0px;top:545.0px;" width="14" height="12" viewBox="0 0 14 12"><rect x="0" y="7" width="14" height="5" fill="#c3c5c7"/><rect x="0" y="0" width="6.500" height="5.500" fill="#c3c5c7"/><rect x="7.500" y="0" width="6.500" height="5.500" fill="#c3c5c7"/></svg>
<svg style="left:26.5px;top:576.5px;" width="15" height="15" viewBox="0 0 16 16"><path d="M9.500 1.500l5 5-1.500 1-1-.5-3 3 .3 2.500-1.300 1-2.500-3L2 14.500l-.5-.5L5.500 10.500 2.500 8l1-1.300 2.500.3 3-3-.5-1z" fill="#c3c5c7"/></svg>
<svg style="left:56.5px;top:453.0px;" width="13" height="13" viewBox="0 0 16 16"><path d="M8 14V4M3.500 8L8 3.200l4.500 4.800" fill="none" stroke="#b6b8ba" stroke-width="2.500"/></svg>
<svg style="left:56.5px;top:479.5px;" width="13" height="13" viewBox="0 0 16 16"><path d="M8 2v10M3.500 8L8 12.800 12.500 8" fill="none" stroke="#b6b8ba" stroke-width="2.500"/></svg>
<svg style="left:56.0px;top:506.0px;" width="14" height="14" viewBox="0 0 14 14"><path d="M0 1.500h14M0 6.500h10.500a2.500 2.500 0 010 5H7M0 11.500h4" fill="none" stroke="#c3c5c7" stroke-width="1.600"/><path d="M8.500 9l-2.500 2.500 2.500 2.500z" fill="#c3c5c7"/></svg>
<div class="a" style="left:52.0px;top:527.5px;width:23.0px;height:22.0px;background:#585b5d;border-radius:3px"></div>
<svg style="left:56.0px;top:531.0px;" width="14" height="14" viewBox="0 0 14 14"><path d="M0 12.500h14" stroke="#c3c5c7" stroke-width="1.800"/><path d="M3.500 1v7M1 5.500L3.500 8.500 6 5.500M10.500 1v7M8 5.500l2.500 3 2.500-3" fill="none" stroke="#c3c5c7" stroke-width="1.400"/></svg>
<svg style="left:55.5px;top:558.0px;" width="15" height="14" viewBox="0 0 15 14"><rect x="3" y="0" width="9" height="4" fill="#c3c5c7"/><rect x="0" y="4.500" width="15" height="6.500" rx="1" fill="#c3c5c7"/><rect x="3.500" y="9" width="8" height="5" fill="#c3c5c7" stroke="#3c3f41" stroke-width="1"/></svg>
<svg style="left:57.0px;top:583.0px;" width="12" height="14" viewBox="0 0 12 14"><rect x="0" y="0" width="12" height="2.500" fill="#c3c5c7"/><rect x="1" y="4" width="10" height="10" fill="#c3c5c7"/></svg>
<div id="console" class="a"><div class="co mono " style="top:0.3px"> [6.7 3.3 5.7 2.5]</div><div class="co mono " style="top:33.4px"> [6.7 3.  5.2 2.3]</div><div class="co mono " style="top:66.6px"> [6.3 2.5 5.  1.9]</div><div class="co mono " style="top:99.7px"> [6.5 3.  5.2 2. ]</div><div class="co mono " style="top:132.9px"> [6.2 3.4 5.4 2.3]</div><div class="co mono " style="top:166.1px"> [5.9 3.  5.1 1.8]]</div><div class="co mono er" style="top:199.2px">    data_to_wrap = f(self, X, *args, **kwargs)</div><div class="co mono er" style="top:232.3px">                   ^^^^^^^^^^^^^^^^^^^^^^^^^^^</div><div class="co mono er" style="top:265.5px">  File "<span class="lk1">D:\python_pro\sklearnPro2\venv\Lib\site-packages\sklearn\base.py</span>", line 894, in fit_transform</div><div class="co mono er" style="top:298.6px">    return self.fit(X, **fit_params).transform(X)</div><div class="co mono er" style="top:331.8px">           ^^^^^^^^^^^^^^^^^^^^^^^^^</div><div class="co mono er" style="top:364.9px">  File "<span class="lku">D:\python_pro\sklearnPro2\venv\Lib\site-packages\sklearn\base.py</span>", line 1365, in wrapper</div><div class="co mono er" style="top:398.1px">    return fit_method(estimator, *args, **kwargs)</div><div class="co mono er" style="top:431.2px">           ^^^^^^^^^^^^^^^^^^^^^^^^^^^^^^^^^^^^^^</div><div class="co mono er" style="top:464.4px">TypeError: LinearDiscriminantAnalysis.fit() missing 1 required positional argument: 'y'</div><div class="co mono " style="top:530.7px">Process finished with exit code 1</div><div class="a" style="left:1815.500px;top:533px;width:7.500px;height:61px;background:#4d4d4d"></div></div>
<svg style="left:671.0px;top:778.0px;" width="10" height="18" viewBox="0 0 10 18"><path d="M1.500 1c2 0 3 .5 3.500 1.500C5.500 1.500 6.500 1 8.500 1M1.500 17c2 0 3-.5 3.500-1.500.5 1 1.500 1.500 3.500 1.500M5 2.500v13" fill="none" stroke="#e8e8e8" stroke-width="1.600"/></svg>
<svg style="left:1806.0px;top:971.5px;" width="52" height="52" viewBox="0 0 52 52"><circle cx="26" cy="26" r="25.600" fill="#f4fbff"/><circle cx="26" cy="26" r="23.600" fill="#86d6fb"/><path d="M9.500 9.500a23.600 23.600 0 0133 0c-4 3.500-9 4.500-14 3.500S15 9.500 9.500 9.500z" fill="#3f8fe6"/><path d="M8 11.500c7-2 13-.5 19 1.500s11 .5 16-2.500" fill="none" stroke="#6db9f5" stroke-width="1.500" opacity=".8"/><text x="26" y="30" text-anchor="middle" font-family="Liberation Sans,sans-serif" font-weight="bold" font-size="12" fill="#f4fbff">04:30</text></svg>
<svg style="left:1911.0px;top:934.0px;" width="9" height="62" viewBox="0 0 9 62"><rect x="0" y="0" width="9" height="62" fill="#3f79b5"/><rect x="1.500" y="3" width="7.500" height="57" fill="#25b567"/><rect x="1.500" y="1.500" width="7.500" height="4" fill="#1d4f6e"/></svg>
<div id="bottomstrip" class="a"></div><div id="statusbar" class="a"></div>
<div class="a" style="left:142.0px;top:1041.0px;width:55.0px;height:22.0px;background:#2d2f30;"></div>
<div class="t " style="left:48.0px;top:1044.5px;font-size:12.00px;color:#bbbbbb;letter-spacing:-0.070px;">Version Control</div>
<div class="t " style="left:167.0px;top:1044.5px;font-size:12.00px;color:#bbbbbb;letter-spacing:-0.005px;">Run</div>
<div class="t " style="left:228.0px;top:1044.5px;font-size:12.00px;color:#bbbbbb;letter-spacing:-0.226px;">Python Packages</div>
<div class="t " style="left:358.0px;top:1044.5px;font-size:12.00px;color:#bbbbbb;letter-spacing:-0.862px;">TODO</div>
<div class="t " style="left:429.0px;top:1044.5px;font-size:12.00px;color:#bbbbbb;letter-spacing:-0.194px;">Python Console</div>
<div class="t " style="left:552.0px;top:1044.5px;font-size:12.00px;color:#bbbbbb;letter-spacing:-0.211px;">Problems</div>
<div class="t " style="left:640.0px;top:1044.5px;font-size:12.00px;color:#bbbbbb;letter-spacing:-0.293px;">Terminal</div>
<div class="t " style="left:723.0px;top:1044.5px;font-size:12.00px;color:#bbbbbb;letter-spacing:-0.502px;">Services</div>
<svg style="left:30.5px;top:1045.5px;" width="13" height="13" viewBox="0 0 16 16"><circle cx="4.500" cy="3" r="1.800" fill="#afb1b3"/><circle cx="4.500" cy="13" r="1.800" fill="#afb1b3"/><circle cx="11.500" cy="5" r="1.800" fill="#afb1b3"/><path d="M4.500 3v10M4.500 10c0-3 7-2 7-5" fill="none" stroke="#afb1b3" stroke-width="1.300"/></svg>
<svg style="left:150.0px;top:1046.0px;" width="12" height="12" viewBox="0 0 16 16"><path d="M3 2.500l10.500 5.500L3 13.500z" fill="#c3c5c7"/></svg>
<svg style="left:209.5px;top:1045.5px;" width="13" height="13" viewBox="0 0 16 16"><path d="M8 1l6 3-6 3-6-3z" fill="#afb1b3"/><path d="M2 7l6 3 6-3M2 10.500l6 3 6-3" fill="none" stroke="#afb1b3" stroke-width="1.600"/></svg>
<svg style="left:340.0px;top:1046.0px;" width="12" height="12" viewBox="0 0 16 16"><path d="M1 3.500h2.500M1 8h2.500M1 12.500h2.500M5.500 3.500H15M5.500 8H15M5.500 12.500H15" stroke="#afb1b3" stroke-width="2"/></svg>
<svg style="left:410.5px;top:1045.5px;" width="13" height="13" viewBox="0 0 16 16"><path d="M7.8 1C5 1 5.2 2.2 5.2 2.2v1.3h2.7v.4H4.1S2.3 3.7 2.3 6.5s1.6 2.7 1.6 2.7h.9V7.9s0-1.6 1.6-1.6h2.7s1.500.0 1.5-1.500V2.400S10.900 1 7.800 1z" fill="#afb1b3"/><path d="M8.2 15c2.800 0 2.600-1.200 2.600-1.200v-1.300H8.100v-.4h3.800s1.800.2 1.800-2.600-1.600-2.700-1.600-2.700h-.9v1.300s0 1.600-1.600 1.600H6.900s-1.500 0-1.500 1.500v2.400S5.100 15 8.200 15z" fill="#afb1b3"/></svg>
<svg style="left:534.5px;top:1045.5px;" width="13" height="13" viewBox="0 0 16 16"><circle cx="8" cy="8" r="7" fill="#afb1b3"/><path d="M8 4v5M8 10.500v2" stroke="#3c3f41" stroke-width="1.800"/></svg>
<svg style="left:621.5px;top:1045.5px;" width="13" height="13" viewBox="0 0 16 16"><rect x="1" y="1.500" width="14" height="13" fill="#afb1b3"/><path d="M3.500 5.500l3 2.500-3 2.500M8 11h4" stroke="#3c3f41" stroke-width="1.400" fill="none"/></svg>
<svg style="left:704.5px;top:1045.5px;" width="13" height="13" viewBox="0 0 16 16"><circle cx="8" cy="8" r="7" fill="#afb1b3"/><path d="M6 4.500l5.500 3.500L6 11.500z" fill="#3c3f41"/></svg>
<svg style="left:9.0px;top:1065.0px;" width="12" height="12" viewBox="0 0 12 12"><rect x="1" y="1.500" width="10" height="9" fill="none" stroke="#9a9c9e" stroke-width="1.300"/><path d="M1 1.500v9" stroke="#9a9c9e" stroke-width="2.500"/></svg>
<div class="t " style="left:1590.0px;top:1064.0px;font-size:12.00px;color:#a0a2a4;letter-spacing:-0.584px;">CRLF</div>
<div class="t " style="left:1631.0px;top:1064.0px;font-size:12.00px;color:#a0a2a4;letter-spacing:0.001px;">UTF-8</div>
<div class="t " style="left:1677.0px;top:1064.0px;font-size:12.00px;color:#a0a2a4;letter-spacing:0.246px;">4 spaces</div>
<div class="t " style="left:1740.0px;top:1064.0px;font-size:12.00px;color:#a0a2a4;letter-spacing:0.459px;">Python 3.11 (sklearnPro2)</div>
<svg style="left:1899.0px;top:1064.5px;" width="12" height="13" viewBox="0 0 12 13"><rect x="1.500" y="5.500" width="9" height="7" fill="#afb1b3"/><path d="M2 5.500V3.500a2.500 2.500 0 015 0" fill="none" stroke="#afb1b3" stroke-width="1.400"/></svg>
<div class="t" style="left:1723px;top:1043px;height:26px;line-height:26px;font-family:'Liberation Serif',serif;font-weight:bold;font-style:italic;font-size:17.5px;color:#f60a0a;-webkit-text-stroke:.3px #f60a0a;transform:scaleX(1.3225);transform-origin:0 50%">www.java1234.com</div>
</body>
</html>
